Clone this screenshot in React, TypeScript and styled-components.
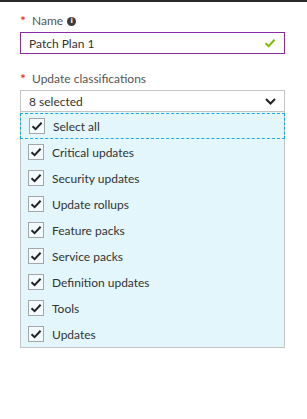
import React from 'react';
import styled, { createGlobalStyle } from 'styled-components';

const GlobalStyle = createGlobalStyle`
    html, body {
        margin: 0;
        padding: 0;
        background: #ffffff;
    }
    body {
        font-family: "Segoe UI", Lato, "Noto Sans", sans-serif;
        font-size: 12px;
        color: #333333;
    }
`

const TopBar = styled.div`
    height: 2px;
    background: #2b2b2b;
`

const Form = styled.div`
    padding: 11px 0 0 20px;
    width: 265px;
    display: flex;
    flex-direction: column;
`

const Field = styled.div<{ gap?: number }>`
    display: flex;
    flex-direction: column;
    margin-bottom: ${p => p.gap ?? 0}px;
`

const Label = styled.div`
    display: flex;
    align-items: center;
    height: 16px;
    margin-bottom: 3px;
    color: #555555;
    font-size: 12px;
    line-height: 16px;
`

const Required = styled.span`
    color: #e81123;
    width: 12px;
    font-size: 14px;
`

const InfoIcon = styled.span`
    display: inline-flex;
    align-items: center;
    justify-content: center;
    width: 9px;
    height: 9px;
    margin-left: 4px;
    border-radius: 50%;
    background: #3c3c3c;
    color: #ffffff;
    font-size: 7px;
    font-weight: bold;
    font-family: "DejaVu Sans", sans-serif;
    line-height: 9px;
`

const TextInput = styled.div`
    box-sizing: border-box;
    height: 22px;
    border: 1px solid #8a2da5;
    display: flex;
    align-items: center;
    justify-content: space-between;
    padding: 0 8px 0 8px;
    color: #333333;
`

const Dropdown = styled.div`
    box-sizing: border-box;
    height: 22px;
    border: 1px solid #c4c4c4;
    display: flex;
    align-items: center;
    justify-content: space-between;
    padding: 0 8px 0 8px;
    color: #333333;
`

const List = styled.div`
    box-sizing: border-box;
    background: #e3f6fc;
    border: 1px solid #c4c4c4;
    border-top: none;
    padding-top: 1px;
`

const Row = styled.div<{ focused?: boolean }>`
    box-sizing: border-box;
    height: 26px;
    display: flex;
    align-items: center;
    margin: ${p => p.focused ? '0 -1px' : '0'};
    padding-left: ${p => p.focused ? '8px' : '7px'};
    border: ${p => p.focused ? '1px dashed #22a7e0' : '1px solid transparent'};
    border-left-width: ${p => p.focused ? '1px' : '0'};
    border-right-width: ${p => p.focused ? '1px' : '0'};
`

const Box = styled.span`
    box-sizing: border-box;
    width: 16px;
    height: 16px;
    border: 1px solid #a6a6a6;
    background: #f4fbfe;
    display: flex;
    align-items: center;
    justify-content: center;
    margin-right: 8px;
`

const ItemText = styled.span`
    color: #333333;
`

const Check: React.FC<{ color: string, size: number }> = ({ color, size }) => (
    <svg width={size} height={size} viewBox="0 0 12 12">
        <path d="M1.5 6.3 L4.6 9.2 L10.6 2.8" fill="none" stroke={color} strokeWidth="2" />
    </svg>
)

const Chevron = () => (
    <svg width="11" height="7" viewBox="0 0 11 7">
        <path d="M1 1 L5.5 5.5 L10 1" fill="none" stroke="#222222" strokeWidth="2" />
    </svg>
)

const items = [
    'Select all',
    'Critical updates',
    'Security updates',
    'Update rollups',
    'Feature packs',
    'Service packs',
    'Definition updates',
    'Tools',
    'Updates',
]

const App: React.FC = () => {
    return (
        <>
            <GlobalStyle />
            <TopBar />
            <Form>
                <Field gap={17}>
                    <Label>
                        <Required>*</Required>
                        Name
                        <InfoIcon>i</InfoIcon>
                    </Label>
                    <TextInput>
                        <span>Patch Plan 1</span>
                        <Check color="#7fba00" size={12} />
                    </TextInput>
                </Field>
                <Field>
                    <Label>
                        <Required>*</Required>
                        Update classifications
                    </Label>
                    <Dropdown>
                        <span>8 selected</span>
                        <Chevron />
                    </Dropdown>
                    <List>
                        {items.map((item, i) =>
                            <Row key={item} focused={i === 0}>
                                <Box><Check color="#222222" size={12} /></Box>
                                <ItemText>{item}</ItemText>
                            </Row>
                        )}
                    </List>
                </Field>
            </Form>
        </>
    )
}

export default App;
